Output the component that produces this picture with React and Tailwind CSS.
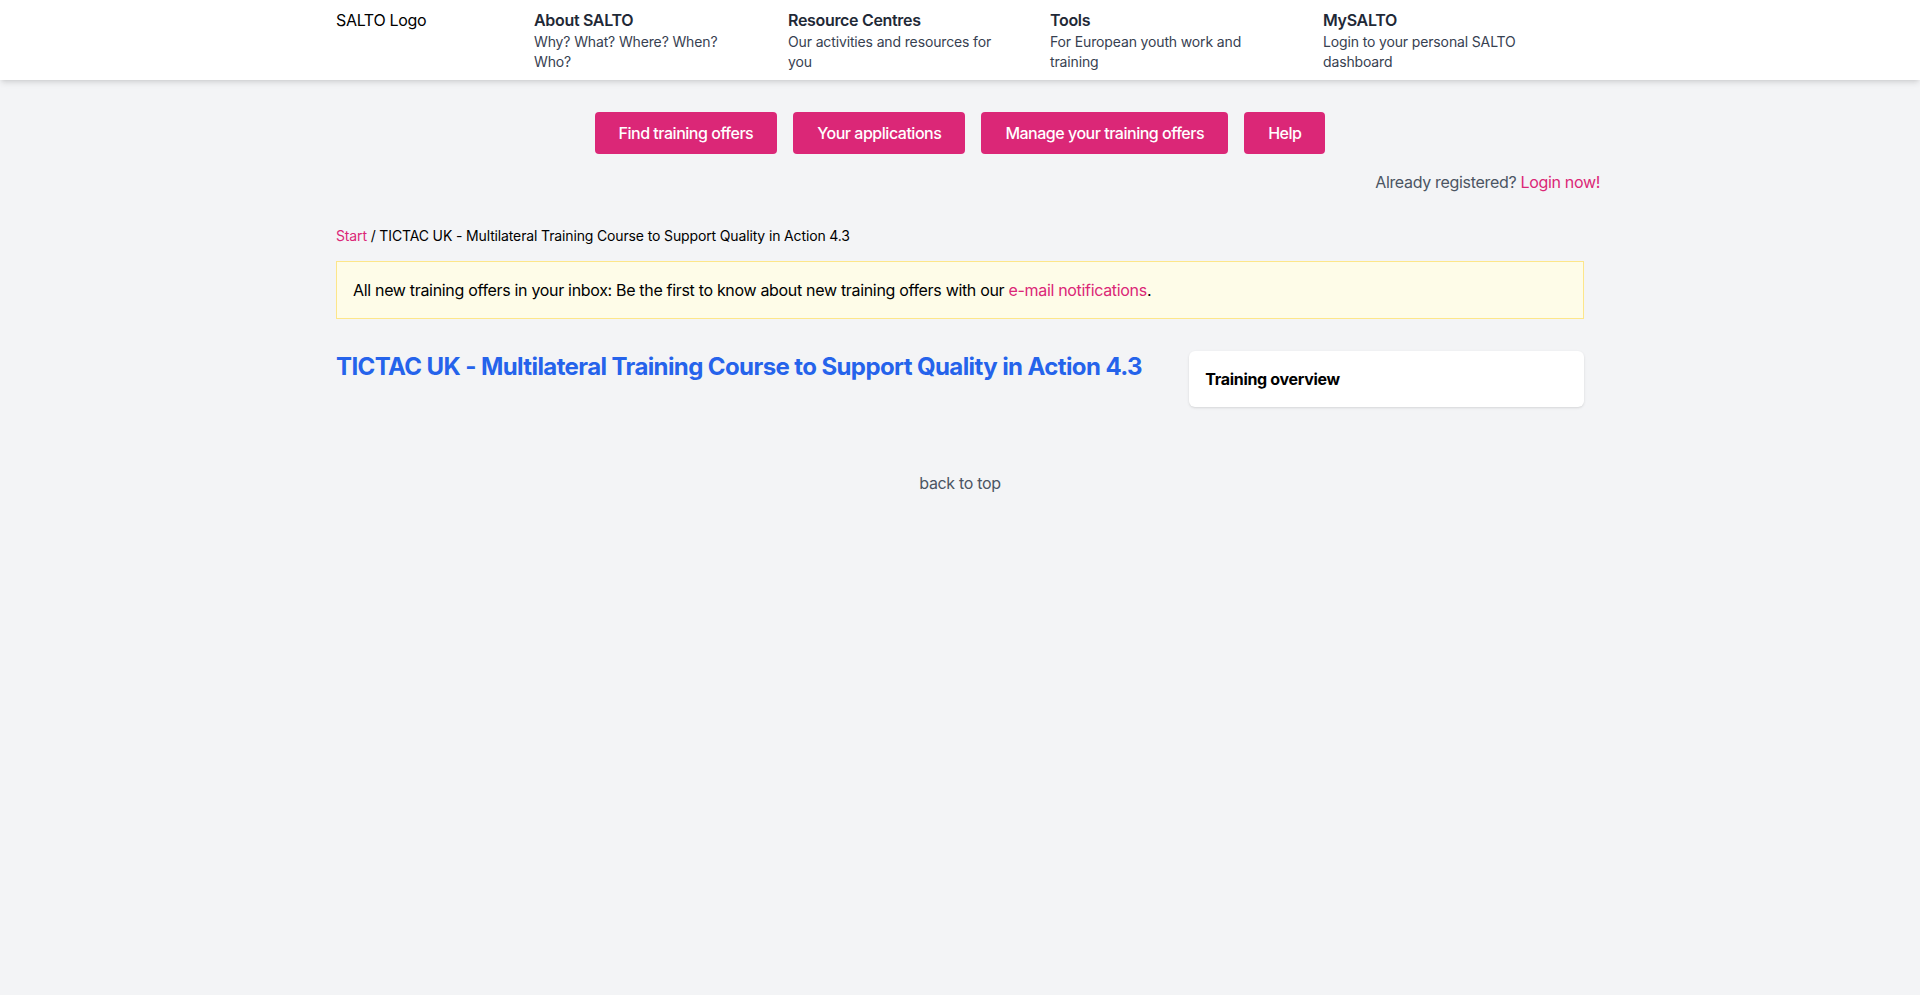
import React from 'react';

const navItems = [
  { title: 'About SALTO', text: 'Why? What? Where? When? Who?' },
  { title: 'Resource Centres', text: 'Our activities and resources for you' },
  { title: 'Tools', text: 'For European youth work and training' },
  { title: 'MySALTO', text: 'Login to your personal SALTO dashboard' },
];

const tabs = ['Find training offers', 'Your applications', 'Manage your training offers', 'Help'];

const App = () => {
  return (
    <div className="min-h-screen bg-[#f3f4f6] font-['Inter',sans-serif] text-black tracking-[-0.02em]">
      {/* Top navigation */}
      <header className="bg-white shadow-md">
        <div className="max-w-7xl mx-auto px-4 py-2 grid grid-cols-[198px_254px_262px_273px_1fr]">
          <div className="text-base leading-6">SALTO Logo</div>
          {navItems.map(item => (
            <div key={item.title}>
              <div className="text-base leading-6 font-semibold text-[#1f2937]">{item.title}</div>
              <p className="text-sm leading-5 text-[#374151] max-w-[212px] tracking-[-0.01em]">{item.text}</p>
            </div>
          ))}
        </div>
      </header>

      {/* Training tool tabs */}
      <div className="flex justify-center gap-4 pt-8">
        {tabs.map(tab => (
          <a
            key={tab}
            href="#"
            className="bg-[#db2777] text-white text-base leading-6 font-medium px-6 py-[9px] rounded tracking-[-0.03em]"
          >
            {tab}
          </a>
        ))}
      </div>

      <main className="max-w-7xl mx-auto">
        <div className="mt-4 text-right text-base leading-6 text-[#4b5563]">
          Already registered? <a href="#" className="text-[#db2777]">Login now!</a>
        </div>

        <div className="px-4">
          <nav className="mt-8 text-sm leading-5 tracking-[-0.01em]">
            <a href="#" className="text-[#db2777]">Start</a> / TICTAC UK - Multilateral Training Course to Support Quality in Action 4.3
          </nav>

          <div className="mt-[15px] border border-[#fde68a] bg-[#fefce8] p-4 text-base leading-6">
            All new training offers in your inbox: Be the first to know about new training offers with our{' '}
            <a href="#" className="text-[#db2777]">e-mail notifications</a>.
          </div>

          <div className="mt-8 grid grid-cols-3 gap-8 items-start">
            <h1 className="col-span-2 text-2xl leading-8 font-bold text-[#2563eb] tracking-[-0.025em]">
              TICTAC UK - Multilateral Training Course to Support Quality in Action 4.3
            </h1>
            <div className="bg-white rounded-md shadow p-4">
              <h2 className="text-base leading-6 font-bold">Training overview</h2>
            </div>
          </div>
        </div>
      </main>

      <footer className="mt-16 text-center">
        <a href="#" className="text-base leading-6 text-[#4b5563]">back to top</a>
      </footer>
    </div>
  );
};

export default App;
